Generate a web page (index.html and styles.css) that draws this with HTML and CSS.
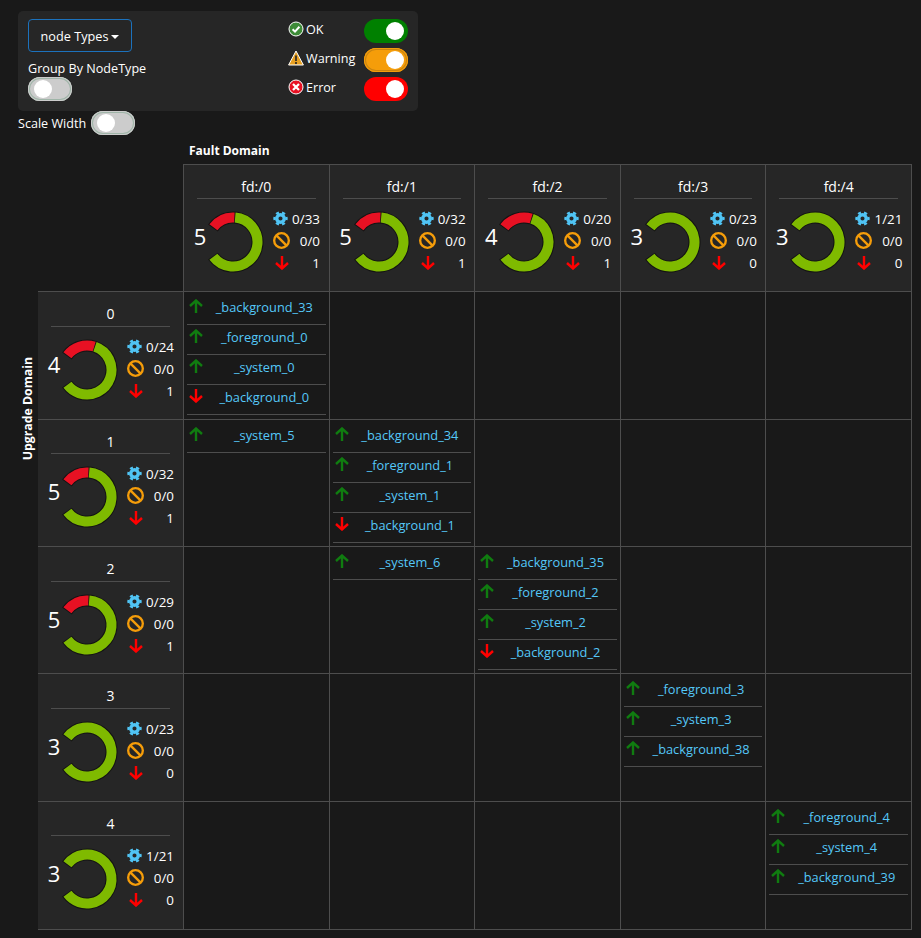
FILE: index.html
```html
<!DOCTYPE html>
<html lang="en">
<head>
    <meta charset="UTF-8">
    <title>Cluster Map</title>
    <link rel="stylesheet" href="styles.css">
</head>
<body>

    <svg class="defs" width="0" height="0">
        <symbol id="gear" viewBox="0 0 16 16">
            <circle cx="8" cy="8" r="4" fill="none" stroke="#50c4f4" stroke-width="3.6"/>
            <circle cx="8" cy="8" r="6.4" fill="none" stroke="#50c4f4" stroke-width="2.6" pathLength="6" stroke-dasharray="0.5 0.5" transform="rotate(-15 8 8)"/>
        </symbol>
        <symbol id="ban" viewBox="0 0 16 16">
            <circle cx="8" cy="8" r="6.9" fill="none" stroke="#f59d0a" stroke-width="2.2"/>
            <path d="M3.2 3.2 12.8 12.8" stroke="#f59d0a" stroke-width="2.2"/>
        </symbol>
        <symbol id="down" viewBox="0 0 14 14">
            <path d="M7 0V12.5M1 7 7 12.5 13 7" fill="none" stroke="#f00" stroke-width="2.4"/>
        </symbol>
        <symbol id="up" viewBox="0 0 14 14">
            <path d="M7 14V1.5M1 7 7 1.5 13 7" fill="none" stroke="#107c10" stroke-width="2.4"/>
        </symbol>
        <symbol id="ok" viewBox="0 0 16 16">
            <circle cx="8" cy="8" r="7" fill="#3d8b37" stroke="#fff"/>
            <path d="M4.6 8.2 7 10.6 11.4 5.8" fill="none" stroke="#fff" stroke-width="2"/>
        </symbol>
        <symbol id="warn" viewBox="0 0 16 16">
            <path d="M8 1 15.4 15H.6Z" fill="#e8a020" stroke="#fff"/>
            <path d="M8 5.5V11M8 12V14" stroke="#222" stroke-width="1.6"/>
        </symbol>
        <symbol id="err" viewBox="0 0 16 16">
            <circle cx="8" cy="8" r="7" fill="#e81123" stroke="#fff"/>
            <path d="M5 5 11 11M11 5 5 11" stroke="#fff" stroke-width="2.2"/>
        </symbol>
        <symbol id="donut5" viewBox="0 0 62 62">
            <circle class="ring-back" cx="31" cy="31" r="24.5" pathLength="360" stroke-dasharray="290 70" transform="rotate(-145 31 31)"/>
            <circle class="ring-ok" cx="31" cy="31" r="24.5" pathLength="360" stroke-dasharray="228 132" transform="rotate(-85 31 31)"/>
            <circle class="ring-err" cx="31" cy="31" r="24.5" pathLength="360" stroke-dasharray="56 304" transform="rotate(-143 31 31)"/>
        </symbol>
        <symbol id="donut4" viewBox="0 0 62 62">
            <circle class="ring-back" cx="31" cy="31" r="24.5" pathLength="360" stroke-dasharray="290 70" transform="rotate(-145 31 31)"/>
            <circle class="ring-ok" cx="31" cy="31" r="24.5" pathLength="360" stroke-dasharray="214 146" transform="rotate(-71 31 31)"/>
            <circle class="ring-err" cx="31" cy="31" r="24.5" pathLength="360" stroke-dasharray="70 290" transform="rotate(-143 31 31)"/>
        </symbol>
        <symbol id="donut3" viewBox="0 0 62 62">
            <circle class="ring-back" cx="31" cy="31" r="24.5" pathLength="360" stroke-dasharray="290 70" transform="rotate(-145 31 31)"/>
            <circle class="ring-ok" cx="31" cy="31" r="24.5" pathLength="360" stroke-dasharray="286 74" transform="rotate(-143 31 31)"/>
        </symbol>
    </svg>

    <div class="controls">
        <div class="controls-left">
            <button class="dropdown" type="button">node Types<span class="caret"></span></button>
            <div class="option-label">Group By NodeType</div>
            <span class="toggle"></span>
        </div>
        <div class="controls-right">
            <div class="status-row">
                <svg class="status-icon"><use href="#ok"/></svg>
                <span class="status-name">OK</span>
                <span class="toggle on ok"></span>
            </div>
            <div class="status-row">
                <svg class="status-icon"><use href="#warn"/></svg>
                <span class="status-name">Warning</span>
                <span class="toggle on warning"></span>
            </div>
            <div class="status-row">
                <svg class="status-icon"><use href="#err"/></svg>
                <span class="status-name">Error</span>
                <span class="toggle on error"></span>
            </div>
        </div>
    </div>

    <div class="scale-row">
        <span>Scale Width</span>
        <span class="toggle"></span>
    </div>

    <div class="fault-title">Fault Domain</div>

    <div class="map">
        <div class="upgrade-title"><span>Upgrade Domain</span></div>

        <div class="map-grid">
            <div class="corner"></div>

            <div class="summary head">
                <div class="summary-title short">fd:/0</div>
                <div class="summary-body">
                    <span class="count">5</span>
                    <svg class="donut"><use href="#donut5"/></svg>
                    <div class="stats">
                        <div class="stat"><svg class="stat-icon"><use href="#gear"/></svg><span>0/33</span></div>
                        <div class="stat"><svg class="stat-icon"><use href="#ban"/></svg><span>0/0</span></div>
                        <div class="stat"><svg class="stat-icon"><use href="#down"/></svg><span>1</span></div>
                    </div>
                </div>
            </div>
            <div class="summary head">
                <div class="summary-title short">fd:/1</div>
                <div class="summary-body">
                    <span class="count">5</span>
                    <svg class="donut"><use href="#donut5"/></svg>
                    <div class="stats">
                        <div class="stat"><svg class="stat-icon"><use href="#gear"/></svg><span>0/32</span></div>
                        <div class="stat"><svg class="stat-icon"><use href="#ban"/></svg><span>0/0</span></div>
                        <div class="stat"><svg class="stat-icon"><use href="#down"/></svg><span>1</span></div>
                    </div>
                </div>
            </div>
            <div class="summary head">
                <div class="summary-title short">fd:/2</div>
                <div class="summary-body">
                    <span class="count">4</span>
                    <svg class="donut"><use href="#donut4"/></svg>
                    <div class="stats">
                        <div class="stat"><svg class="stat-icon"><use href="#gear"/></svg><span>0/20</span></div>
                        <div class="stat"><svg class="stat-icon"><use href="#ban"/></svg><span>0/0</span></div>
                        <div class="stat"><svg class="stat-icon"><use href="#down"/></svg><span>1</span></div>
                    </div>
                </div>
            </div>
            <div class="summary head">
                <div class="summary-title short">fd:/3</div>
                <div class="summary-body">
                    <span class="count">3</span>
                    <svg class="donut"><use href="#donut3"/></svg>
                    <div class="stats">
                        <div class="stat"><svg class="stat-icon"><use href="#gear"/></svg><span>0/23</span></div>
                        <div class="stat"><svg class="stat-icon"><use href="#ban"/></svg><span>0/0</span></div>
                        <div class="stat"><svg class="stat-icon"><use href="#down"/></svg><span>0</span></div>
                    </div>
                </div>
            </div>
            <div class="summary head">
                <div class="summary-title short">fd:/4</div>
                <div class="summary-body">
                    <span class="count">3</span>
                    <svg class="donut"><use href="#donut3"/></svg>
                    <div class="stats">
                        <div class="stat"><svg class="stat-icon"><use href="#gear"/></svg><span>1/21</span></div>
                        <div class="stat"><svg class="stat-icon"><use href="#ban"/></svg><span>0/0</span></div>
                        <div class="stat"><svg class="stat-icon"><use href="#down"/></svg><span>0</span></div>
                    </div>
                </div>
            </div>

            <!-- upgrade domain 0 -->
            <div class="summary">
                <div class="summary-title">0</div>
                <div class="summary-body">
                    <span class="count">4</span>
                    <svg class="donut"><use href="#donut4"/></svg>
                    <div class="stats">
                        <div class="stat"><svg class="stat-icon"><use href="#gear"/></svg><span>0/24</span></div>
                        <div class="stat"><svg class="stat-icon"><use href="#ban"/></svg><span>0/0</span></div>
                        <div class="stat"><svg class="stat-icon"><use href="#down"/></svg><span>1</span></div>
                    </div>
                </div>
            </div>
            <div class="cell">
                <div class="node"><svg class="arrow"><use href="#up"/></svg><a>_background_33</a></div>
                <div class="node"><svg class="arrow"><use href="#up"/></svg><a>_foreground_0</a></div>
                <div class="node"><svg class="arrow"><use href="#up"/></svg><a>_system_0</a></div>
                <div class="node"><svg class="arrow"><use href="#down"/></svg><a>_background_0</a></div>
            </div>
            <div class="cell"></div>
            <div class="cell"></div>
            <div class="cell"></div>
            <div class="cell"></div>

            <!-- upgrade domain 1 -->
            <div class="summary">
                <div class="summary-title short">1</div>
                <div class="summary-body">
                    <span class="count">5</span>
                    <svg class="donut"><use href="#donut5"/></svg>
                    <div class="stats">
                        <div class="stat"><svg class="stat-icon"><use href="#gear"/></svg><span>0/32</span></div>
                        <div class="stat"><svg class="stat-icon"><use href="#ban"/></svg><span>0/0</span></div>
                        <div class="stat"><svg class="stat-icon"><use href="#down"/></svg><span>1</span></div>
                    </div>
                </div>
            </div>
            <div class="cell">
                <div class="node"><svg class="arrow"><use href="#up"/></svg><a>_system_5</a></div>
            </div>
            <div class="cell">
                <div class="node"><svg class="arrow"><use href="#up"/></svg><a>_background_34</a></div>
                <div class="node"><svg class="arrow"><use href="#up"/></svg><a>_foreground_1</a></div>
                <div class="node"><svg class="arrow"><use href="#up"/></svg><a>_system_1</a></div>
                <div class="node"><svg class="arrow"><use href="#down"/></svg><a>_background_1</a></div>
            </div>
            <div class="cell"></div>
            <div class="cell"></div>
            <div class="cell"></div>

            <!-- upgrade domain 2 -->
            <div class="summary">
                <div class="summary-title">2</div>
                <div class="summary-body">
                    <span class="count">5</span>
                    <svg class="donut"><use href="#donut5"/></svg>
                    <div class="stats">
                        <div class="stat"><svg class="stat-icon"><use href="#gear"/></svg><span>0/29</span></div>
                        <div class="stat"><svg class="stat-icon"><use href="#ban"/></svg><span>0/0</span></div>
                        <div class="stat"><svg class="stat-icon"><use href="#down"/></svg><span>1</span></div>
                    </div>
                </div>
            </div>
            <div class="cell"></div>
            <div class="cell">
                <div class="node"><svg class="arrow"><use href="#up"/></svg><a>_system_6</a></div>
            </div>
            <div class="cell">
                <div class="node"><svg class="arrow"><use href="#up"/></svg><a>_background_35</a></div>
                <div class="node"><svg class="arrow"><use href="#up"/></svg><a>_foreground_2</a></div>
                <div class="node"><svg class="arrow"><use href="#up"/></svg><a>_system_2</a></div>
                <div class="node"><svg class="arrow"><use href="#down"/></svg><a>_background_2</a></div>
            </div>
            <div class="cell"></div>
            <div class="cell"></div>

            <!-- upgrade domain 3 -->
            <div class="summary">
                <div class="summary-title">3</div>
                <div class="summary-body">
                    <span class="count">3</span>
                    <svg class="donut"><use href="#donut3"/></svg>
                    <div class="stats">
                        <div class="stat"><svg class="stat-icon"><use href="#gear"/></svg><span>0/23</span></div>
                        <div class="stat"><svg class="stat-icon"><use href="#ban"/></svg><span>0/0</span></div>
                        <div class="stat"><svg class="stat-icon"><use href="#down"/></svg><span>0</span></div>
                    </div>
                </div>
            </div>
            <div class="cell"></div>
            <div class="cell"></div>
            <div class="cell"></div>
            <div class="cell">
                <div class="node"><svg class="arrow"><use href="#up"/></svg><a>_foreground_3</a></div>
                <div class="node"><svg class="arrow"><use href="#up"/></svg><a>_system_3</a></div>
                <div class="node"><svg class="arrow"><use href="#up"/></svg><a>_background_38</a></div>
            </div>
            <div class="cell"></div>

            <!-- upgrade domain 4 -->
            <div class="summary">
                <div class="summary-title short">4</div>
                <div class="summary-body">
                    <span class="count">3</span>
                    <svg class="donut"><use href="#donut3"/></svg>
                    <div class="stats">
                        <div class="stat"><svg class="stat-icon"><use href="#gear"/></svg><span>1/21</span></div>
                        <div class="stat"><svg class="stat-icon"><use href="#ban"/></svg><span>0/0</span></div>
                        <div class="stat"><svg class="stat-icon"><use href="#down"/></svg><span>0</span></div>
                    </div>
                </div>
            </div>
            <div class="cell"></div>
            <div class="cell"></div>
            <div class="cell"></div>
            <div class="cell"></div>
            <div class="cell">
                <div class="node"><svg class="arrow"><use href="#up"/></svg><a>_foreground_4</a></div>
                <div class="node"><svg class="arrow"><use href="#up"/></svg><a>_system_4</a></div>
                <div class="node"><svg class="arrow"><use href="#up"/></svg><a>_background_39</a></div>
            </div>
        </div>
    </div>

</body>
</html>
```

FILE: styles.css
```css
* {
    box-sizing: border-box;
}

body {
    margin: 0;
    background-color: #191919;
    color: #fff;
    font-family: "Open Sans", "Noto Sans", sans-serif;
    font-size: 12.6px;
    height: 938px;
    overflow: hidden;
}

.defs {
    position: absolute;
}

/* controls panel */
.controls {
    display: flex;
    justify-content: space-between;
    width: 400px;
    height: 100px;
    margin: 11px 0 0 18px;
    padding: 8px 10px;
    background-color: #262626;
    border-radius: 5px;
}

.dropdown {
    display: block;
    width: 104px;
    height: 33px;
    padding: 0;
    background: transparent;
    border: 1px solid #1c72bd;
    border-radius: 4px;
    color: #fff;
    font-family: inherit;
    font-size: 12.7px;
}

.caret {
    display: inline-block;
    margin-left: 3px;
    vertical-align: 2px;
    border-top: 4px solid #fff;
    border-left: 4px solid transparent;
    border-right: 4px solid transparent;
}

.option-label {
    margin-top: 8px;
    height: 17px;
    line-height: 17px;
}

.toggle {
    display: block;
    position: relative;
    flex: none;
    width: 44px;
    height: 24px;
    border-radius: 12px;
    background-color: #ccc;
    box-shadow: inset 0 0 0 1px #ccc, inset 0 0 0 2px #9fb5a8;
}

.toggle::after {
    content: "";
    position: absolute;
    top: 3px;
    left: 6px;
    width: 18px;
    height: 18px;
    border-radius: 50%;
    background-color: #fff;
}

.toggle.on::after {
    left: 22px;
}

.toggle.ok {
    background-color: #008000;
    box-shadow: none;
}

.toggle.warning {
    background-color: #f59d0a;
    box-shadow: inset 0 0 0 1px #f59d0a, inset 0 0 0 2px #c98410;
}

.toggle.error {
    background-color: #f00;
    box-shadow: none;
}

.controls-right {
    display: flex;
    flex-direction: column;
    gap: 5px;
    width: 120px;
}

.status-row {
    display: flex;
    align-items: center;
    height: 24px;
}

.status-icon {
    width: 16px;
    height: 16px;
    margin-right: 2px;
    margin-bottom: 4px;
}

.status-name {
    flex: 1;
    margin-bottom: 4px;
}

.scale-row {
    display: flex;
    align-items: center;
    gap: 5px;
    height: 24px;
    margin-left: 18px;
}

.fault-title {
    height: 29px;
    padding: 7px 0 0 189px;
    font-size: 12px;
    font-weight: 700;
    line-height: 17px;
}

/* map */
.map {
    display: flex;
    padding-left: 18px;
}

.upgrade-title {
    width: 20px;
    padding-top: 193px;
}

.upgrade-title span {
    display: block;
    writing-mode: vertical-rl;
    transform: rotate(180deg);
    font-size: 12.3px;
    font-weight: 700;
    line-height: 20px;
}

.map-grid {
    display: grid;
    grid-template-columns: 146px repeat(5, 1fr);
    grid-template-rows: 128px 128px 127px 127px 128px 128px;
    width: 874px;
}

.corner {
    border-right: 1px solid #4d4d4d;
    border-bottom: 1px solid #4d4d4d;
}

.summary {
    padding: 0 13px;
    background-color: #262626;
    border-right: 1px solid #4d4d4d;
    border-bottom: 1px solid #4d4d4d;
}

.summary.head {
    border-top: 1px solid #4d4d4d;
}

.summary-title {
    height: 35px;
    padding-top: 12px;
    border-bottom: 1px solid #4d4d4d;
    font-size: 14px;
    line-height: 20px;
    text-align: center;
}

.summary-title.short {
    height: 34px;
}

.summary-body {
    display: flex;
    align-items: center;
    height: 85px;
    margin: 0 -13px;
    padding-left: 6px;
}

.count {
    width: 20px;
    margin-bottom: 12px;
    font-size: 22px;
    text-align: center;
}

.donut {
    flex: none;
    width: 62px;
    height: 62px;
    margin-left: -8px;
}

.ring-back,
.ring-ok,
.ring-err {
    fill: none;
}

.ring-back {
    stroke: #131313;
    stroke-width: 12;
}

.ring-ok {
    stroke: #7fba00;
    stroke-width: 10;
}

.ring-err {
    stroke: #e81123;
    stroke-width: 10;
}

.stats {
    width: 47px;
    margin: -2px 0 0 9px;
}

.stat {
    display: flex;
    align-items: center;
    justify-content: space-between;
    height: 22px;
    font-size: 13.4px;
}

.stat-icon {
    width: 15px;
    height: 15px;
}

.stat:nth-child(2) .stat-icon {
    width: 17px;
    height: 17px;
}

.stat:nth-child(3) .stat-icon {
    width: 14px;
    height: 14px;
    margin-left: 2px;
}

.cell {
    padding: 3px 3px 0;
    border-right: 1px solid #4d4d4d;
    border-bottom: 1px solid #4d4d4d;
}

.node {
    display: flex;
    align-items: center;
    height: 30px;
    padding: 0 0 5px 2px;
    border-bottom: 1px solid #4d4d4d;
}

.arrow {
    flex: none;
    width: 14px;
    height: 14px;
    margin-bottom: 2px;
}

.node a {
    flex: 1;
    color: #55c8f8;
    font-size: 12.8px;
    text-align: center;
}
```
